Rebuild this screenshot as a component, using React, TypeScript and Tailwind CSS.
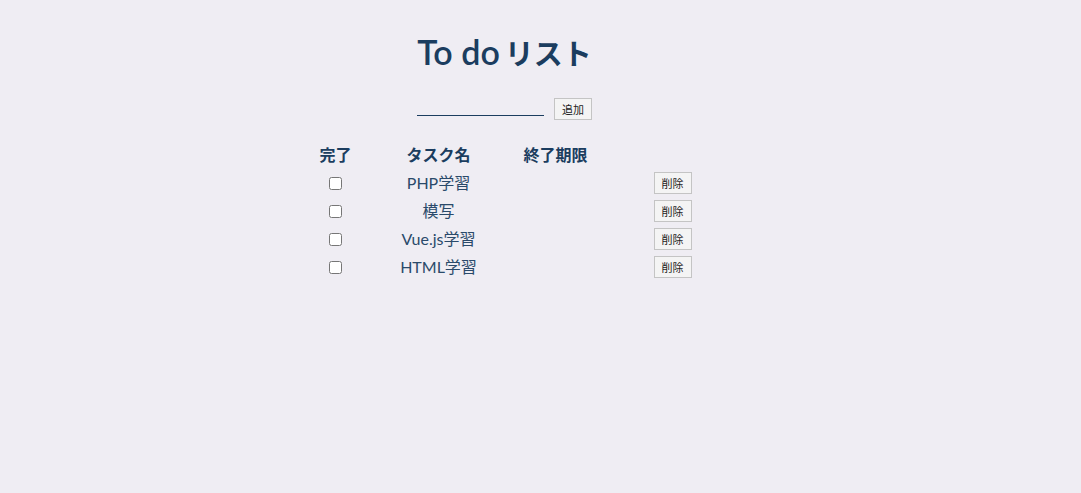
import React, { useState } from "react";

type Todo = {
  id: number;
  name: string;
  done: boolean;
  deadline: string;
};

const initialTodos: Todo[] = [
  { id: 1, name: "PHP学習", done: false, deadline: "" },
  { id: 2, name: "模写", done: false, deadline: "" },
  { id: 3, name: "Vue.js学習", done: false, deadline: "" },
  { id: 4, name: "HTML学習", done: false, deadline: "" },
];

const font = "font-['Lato','Noto_Sans_CJK_JP',sans-serif]";

const App = () => {
  const [todos, setTodos] = useState<Todo[]>(initialTodos);
  const [newTask, setNewTask] = useState("");

  const addTodo = () => {
    if (!newTask) return;
    setTodos([...todos, { id: Date.now(), name: newTask, done: false, deadline: "" }]);
    setNewTask("");
  };

  const toggle = (id: number) =>
    setTodos(todos.map((t) => (t.id === id ? { ...t, done: !t.done } : t)));

  const remove = (id: number) => setTodos(todos.filter((t) => t.id !== id));

  return (
    <div className={`min-h-[493px] bg-[#efedf3] text-[#1b3d5f] ${font}`}>
      <div className="flex flex-col items-center pr-[72px] pt-[31px]">
        <h1 className="text-[34px] font-semibold leading-[41px]">
          To do<span className="ml-[5px] text-[29px]">リスト</span>
        </h1>

        <div className="mt-[21px] flex items-end gap-[10px]">
          <input
            type="text"
            value={newTask}
            onChange={(e) => setNewTask(e.target.value)}
            className="h-[21px] w-[127px] border-b border-[#1b3d5f] bg-transparent text-[13px] outline-none"
          />
          <button
            onClick={addTodo}
            className="mb-[-4px] h-[22px] w-[38px] border border-[#c4c4c4] bg-[#f4f4f4] text-[11px] leading-[20px] text-[#222] font-['Noto_Sans_CJK_JP',sans-serif]"
          >
            追加
          </button>
        </div>

        <div className="mt-[25px] ml-[22px] grid grid-cols-[80px_126px_108px_126px]">
          <div className="flex h-[28px] items-center justify-center text-[16px] font-bold">完了</div>
          <div className="flex h-[28px] items-center justify-center text-[16px] font-bold">タスク名</div>
          <div className="flex h-[28px] items-center justify-center text-[16px] font-bold">終了期限</div>
          <div className="h-[28px]" />

          {todos.map((todo) => (
            <React.Fragment key={todo.id}>
              <div className="flex h-[28px] items-center justify-center">
                <input
                  type="checkbox"
                  checked={todo.done}
                  onChange={() => toggle(todo.id)}
                  className="h-[13px] w-[13px]"
                />
              </div>
              <div className="flex h-[28px] items-center justify-center text-[16px] text-[#2a4a6a]">{todo.name}</div>
              <div className="flex h-[28px] items-center justify-center text-[16px]">{todo.deadline}</div>
              <div className="flex h-[28px] items-center justify-center">
                <button
                  onClick={() => remove(todo.id)}
                  className="h-[22px] w-[38px] border border-[#c4c4c4] bg-[#f4f4f4] text-[11px] leading-[20px] text-[#222] font-['Noto_Sans_CJK_JP',sans-serif]"
                >
                  削除
                </button>
              </div>
            </React.Fragment>
          ))}
        </div>
      </div>
    </div>
  );
};

export default App;
